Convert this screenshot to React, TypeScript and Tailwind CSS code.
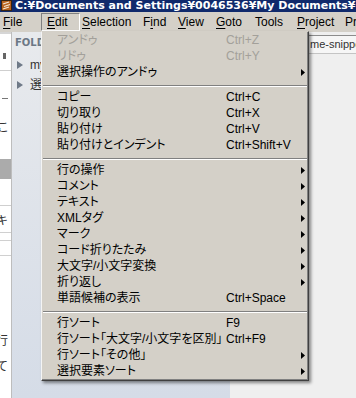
import React from 'react';

type Entry =
  | { sep: true }
  | { sep?: false; label: string; shortcut?: string; sub?: boolean; disabled?: boolean };

const entries: Entry[] = [
  { label: 'アンドゥ', shortcut: 'Ctrl+Z', disabled: true },
  { label: 'リドゥ', shortcut: 'Ctrl+Y', disabled: true },
  { label: '選択操作のアンドゥ', sub: true },
  { sep: true },
  { label: 'コピー', shortcut: 'Ctrl+C' },
  { label: '切り取り', shortcut: 'Ctrl+X' },
  { label: '貼り付け', shortcut: 'Ctrl+V' },
  { label: '貼り付けとインデント', shortcut: 'Ctrl+Shift+V' },
  { sep: true },
  { label: '行の操作', sub: true },
  { label: 'コメント', sub: true },
  { label: 'テキスト', sub: true },
  { label: 'XMLタグ', sub: true },
  { label: 'マーク', sub: true },
  { label: 'コード折りたたみ', sub: true },
  { label: '大文字/小文字変換', sub: true },
  { label: '折り返し', sub: true },
  { label: '単語候補の表示', shortcut: 'Ctrl+Space' },
  { sep: true },
  { label: '行ソート', shortcut: 'F9' },
  { label: '行ソート「大文字/小文字を区別」', shortcut: 'Ctrl+F9' },
  { label: '行ソート「その他」', sub: true },
  { label: '選択要素ソート', sub: true },
];

function Arrow() {
  return (
    <svg width="4" height="7" viewBox="0 0 4 7" className="shrink-0">
      <path d="M0 0 L4 3.5 L0 7 Z" fill="#000" />
    </svg>
  );
}

function MenuItem({ e }: { e: Entry }) {
  if (e.sep) {
    return (
      <div className="h-[9px] pt-[5px] px-[1px]">
        <div className="h-px bg-[#808080]" />
        <div className="h-px bg-white" />
      </div>
    );
  }
  return (
    <div
      className={`flex h-4 items-center pl-[15px] pr-[3px] leading-4 ${
        e.disabled ? 'text-[#a3a09a]' : 'text-black'
      }`}
    >
      <span className="w-[169px] shrink-0 whitespace-nowrap">{e.label}</span>
      <span className="flex-1 whitespace-nowrap">{e.shortcut}</span>
      {e.sub && <Arrow />}
    </div>
  );
}

function TopItem({ text, u, w }: { text: string; u: number; w: string }) {
  return (
    <div className={`${w} shrink-0 whitespace-nowrap`}>
      {text.slice(0, u)}
      <span className="underline underline-offset-2">{text[u]}</span>
      {text.slice(u + 1)}
    </div>
  );
}

export default function App() {
  return (
    <div className="relative w-[356px] h-[398px] overflow-hidden bg-[#efefef] font-['Liberation_Sans','Noto_Sans_CJK_JP',sans-serif]">
      {/* title bar */}
      <div className="flex h-[12px] items-start bg-[#102a6c] overflow-hidden">
        <svg width="11" height="11" viewBox="0 0 11 11" className="ml-[1px] shrink-0">
          <rect x="0.5" y="0.5" width="10" height="10" fill="#b8621f" stroke="#3a2410" />
          <path d="M2 4 L8 2 M3 6.5 L9 4.5 M2 9 L8 7" stroke="#f2e6d6" strokeWidth="1.3" />
        </svg>
        <span className="ml-[3px] whitespace-nowrap font-['DejaVu_Sans',sans-serif] text-[11px] font-bold leading-[11px] text-white">
          C:¥Documents and Settings¥0046536¥My Documents¥My
        </span>
      </div>

      {/* menu bar */}
      <div className="flex h-[20px] items-center bg-[#d4d0c8] pl-[3px] text-[12px] text-black">
        <TopItem text="File" u={0} w="w-[38px]" />
        <div className="flex h-[18px] w-[39px] shrink-0 items-center border border-t-[#808080] border-l-[#808080] border-b-white border-r-white pl-[5px]">
          <span className="underline underline-offset-2">E</span>dit
        </div>
        <div className="w-[2px] shrink-0" />
        <TopItem text="Selection" u={0} w="w-[61px]" />
        <TopItem text="Find" u={1} w="w-[35px]" />
        <TopItem text="View" u={0} w="w-[38px]" />
        <TopItem text="Goto" u={0} w="w-[39px]" />
        <div className="w-[42px] shrink-0">Tools</div>
        <TopItem text="Project" u={0} w="w-[48px]" />
        <div className="whitespace-nowrap">Preferences</div>
      </div>

      {/* body */}
      <div className="flex h-[366px]">
        <div className="flex w-[12px] shrink-0 flex-col overflow-hidden border-r border-[#bdbdbd] bg-white text-[12px] leading-[14px] text-[#333]">
          <div className="h-[2px] bg-[#d6d6d6]" />
          <div className="mt-[19px] ml-[3px] h-[6px] w-[3px] bg-[#666]" />
          <div className="mt-[11px] h-px bg-[#cfcfcf]" />
          <div className="mt-[27px] ml-[2px] h-px w-[6px] bg-[#777]" />
          <div className="mt-[22px] -ml-[3px]">こ</div>
          <div className="mt-[24px] h-[20px] bg-[#ababab]" />
          <div className="mt-[26px] h-px bg-[#cfcfcf]" />
          <div className="mt-[8px] -ml-[4px]">キ</div>
          <div className="mt-[4px] h-px bg-[#d0d0d0]" />
          <div className="mt-[7px] h-px bg-[#d0d0d0]" />
          <div className="mt-[14px] h-px bg-[#d0d0d0]" />
          <div className="mt-[78px] -ml-[4px]">行</div>
          <div className="mt-[12px] -ml-[4px]">て</div>
        </div>

        <div className="w-[218px] shrink-0 bg-gradient-to-b from-[#e8eaed] to-[#d5dce7] pl-[3px] pt-[5px]">
          <div className="font-['DejaVu_Sans',sans-serif] text-[10px] font-bold leading-[12px] text-[#6c7886]">FOLDERS</div>
          <div className="mt-[9px] flex items-center text-[12px] leading-[14px] text-[#333]">
            <svg width="6" height="8" viewBox="0 0 6 8" className="ml-[2px]">
              <path d="M0 0 L6 4 L0 8 Z" fill="#6f7a88" />
            </svg>
            <span className="ml-[7px]">my_snippets</span>
          </div>
          <div className="mt-[6px] flex items-center text-[12px] leading-[14px] text-[#333]">
            <svg width="6" height="8" viewBox="0 0 6 8" className="ml-[2px]">
              <path d="M0 0 L6 4 L0 8 Z" fill="#6f7a88" />
            </svg>
            <span className="ml-[7px]">選択</span>
          </div>
        </div>

        <div className="flex-1 bg-[#efefef]">
          <div className="mt-[3px] flex h-[19px] items-center border-y border-t-[#8c8c8c] border-b-[#c4c4c4] bg-[#f6f6f6] pl-[80px] text-[11px] text-[#333] whitespace-nowrap">
            me-snippet.sublime-snippet
          </div>
        </div>
      </div>

      {/* Edit dropdown */}
      <div className="absolute left-[41px] top-[31px] w-[268px] border border-t-[#d4d0c8] border-l-[#f4f4f4] border-r-[#404040] border-b-[#404040] bg-[#d4d0c8] pb-[1px] text-[12px] [font-feature-settings:'palt'] shadow-[inset_-1px_-1px_0_#808080,2px_2px_3px_rgba(0,0,0,0.45)]">
        {entries.map((e, i) => (
          <MenuItem key={i} e={e} />
        ))}
      </div>
    </div>
  );
}
